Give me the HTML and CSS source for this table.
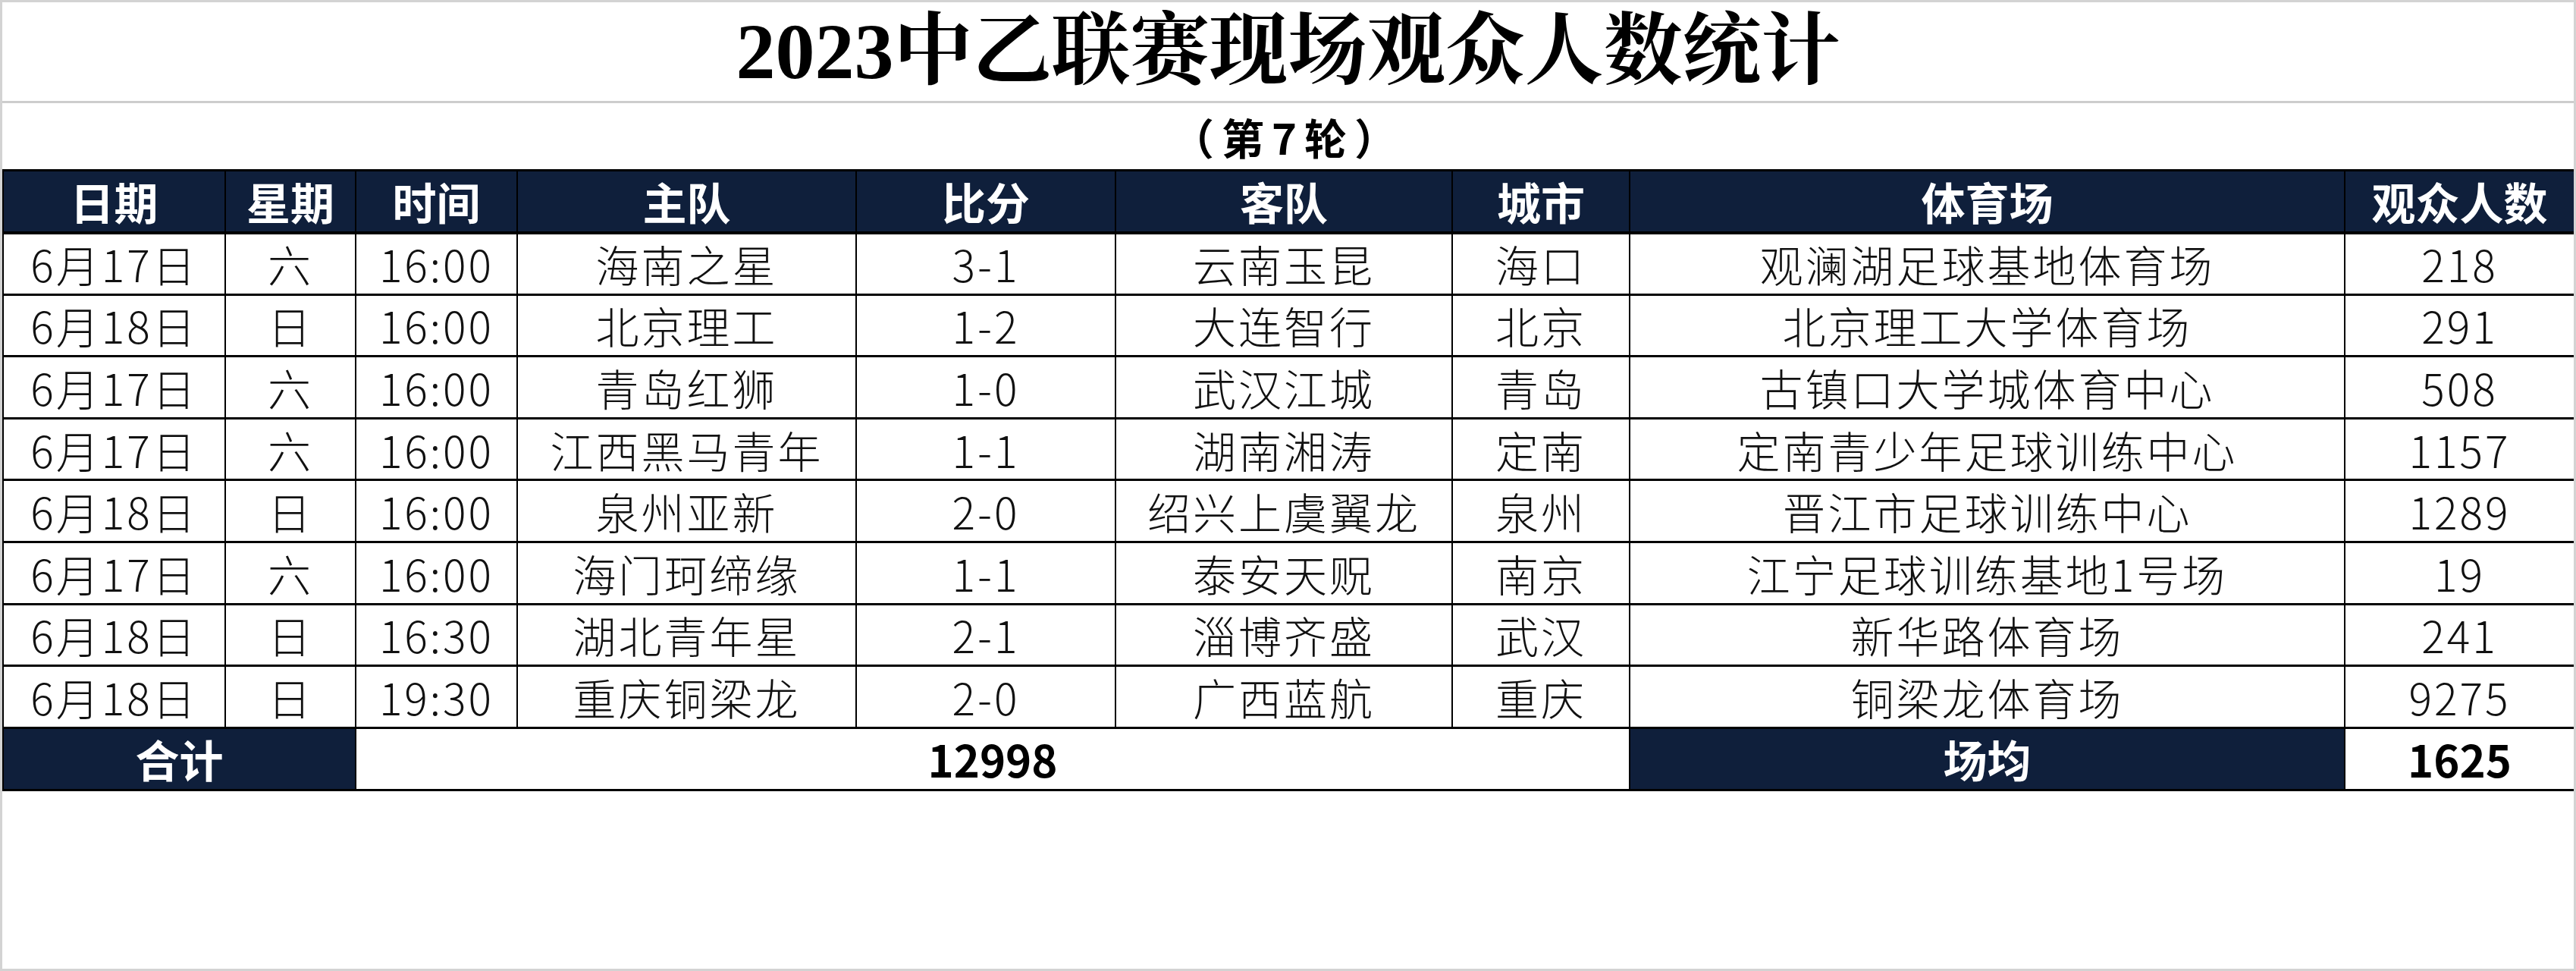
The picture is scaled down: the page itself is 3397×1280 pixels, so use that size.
FILE: index.html
```html
<!DOCTYPE html>
<html lang="zh-CN">
<head>
<meta charset="utf-8">
<title>2023中乙联赛现场观众人数统计</title>
<link rel="stylesheet" href="styles.css">
</head>
<body>
<div class="sheet">
  <div class="title">2023中乙联赛现场观众人数统计</div>
  <div class="subtitle">（第7轮）</div>
  <table class="stats">
    <colgroup>
      <col class="c-date"><col class="c-week"><col class="c-time"><col class="c-home"><col class="c-score"><col class="c-away"><col class="c-city"><col class="c-venue"><col class="c-crowd">
    </colgroup>
    <thead>
      <tr><th>日期</th><th>星期</th><th>时间</th><th>主队</th><th>比分</th><th>客队</th><th>城市</th><th>体育场</th><th>观众人数</th></tr>
    </thead>
    <tbody>
      <tr><td>6月17日</td><td>六</td><td>16:00</td><td>海南之星</td><td>3-1</td><td>云南玉昆</td><td>海口</td><td>观澜湖足球基地体育场</td><td>218</td></tr>
      <tr><td>6月18日</td><td>日</td><td>16:00</td><td>北京理工</td><td>1-2</td><td>大连智行</td><td>北京</td><td>北京理工大学体育场</td><td>291</td></tr>
      <tr><td>6月17日</td><td>六</td><td>16:00</td><td>青岛红狮</td><td>1-0</td><td>武汉江城</td><td>青岛</td><td>古镇口大学城体育中心</td><td>508</td></tr>
      <tr><td>6月17日</td><td>六</td><td>16:00</td><td>江西黑马青年</td><td>1-1</td><td>湖南湘涛</td><td>定南</td><td>定南青少年足球训练中心</td><td>1157</td></tr>
      <tr><td>6月18日</td><td>日</td><td>16:00</td><td>泉州亚新</td><td>2-0</td><td>绍兴上虞翼龙</td><td>泉州</td><td>晋江市足球训练中心</td><td>1289</td></tr>
      <tr><td>6月17日</td><td>六</td><td>16:00</td><td>海门珂缔缘</td><td>1-1</td><td>泰安天贶</td><td>南京</td><td>江宁足球训练基地1号场</td><td>19</td></tr>
      <tr><td>6月18日</td><td>日</td><td>16:30</td><td>湖北青年星</td><td>2-1</td><td>淄博齐盛</td><td>武汉</td><td>新华路体育场</td><td>241</td></tr>
      <tr><td>6月18日</td><td>日</td><td>19:30</td><td>重庆铜梁龙</td><td>2-0</td><td>广西蓝航</td><td>重庆</td><td>铜梁龙体育场</td><td>9275</td></tr>
    </tbody>
    <tfoot>
      <tr><th colspan="2">合计</th><td colspan="5" class="sum">12998</td><th>场均</th><td class="sum">1625</td></tr>
    </tfoot>
  </table>
</div>
</body>
</html>
```

FILE: styles.css
```css
html, body {
  margin: 0;
  padding: 0;
  background: #ffffff;
}

.sheet {
  width: 3397px;
  height: 1280px;
  box-sizing: border-box;
  border: 3px solid #d3d3d3;
  background: #ffffff;
  overflow: hidden;
}

.title {
  height: 130px;
  border-bottom: 3px solid #cdcdcd;
  display: flex;
  align-items: center;
  justify-content: center;
  font-family: "Liberation Serif", "Noto Serif CJK SC", "Noto Sans CJK SC", serif;
  font-size: 104px;
  font-weight: 700;
  line-height: 1;
  color: #000000;
}

.subtitle {
  height: 87px;
  display: flex;
  align-items: center;
  justify-content: center;
  font-family: "Noto Sans CJK SC", sans-serif;
  font-size: 56px;
  font-weight: 700;
  letter-spacing: 10px;
  line-height: 1;
  color: #000000;
}

.stats {
  width: 100%;
  table-layout: fixed;
  border-collapse: collapse;
  font-family: "Noto Sans CJK SC", sans-serif;
}

.c-date { width: 293px; }
.c-week { width: 172px; }
.c-time { width: 213px; }
.c-home { width: 447px; }
.c-score { width: 342px; }
.c-away { width: 444px; }
.c-city { width: 234px; }
.c-venue { width: 943px; }
.c-crowd { width: 303px; }

.stats th,
.stats td {
  padding: 0;
  text-align: center;
  vertical-align: middle;
  border-left: 2px solid #000000;
  border-right: 2px solid #000000;
  border-top: 3px solid #000000;
  border-bottom: 3px solid #000000;
  white-space: nowrap;
  overflow: hidden;
}

.stats th {
  background: #0f1f3b;
  color: #ffffff;
  font-size: 58px;
  font-weight: 700;
  line-height: 1;
}

.stats thead tr {
  height: 82px;
}

.stats thead th {
  border-bottom: 4px solid #000000;
}

.stats tbody tr {
  height: 81.6px;
}

.stats tbody td {
  font-size: 57px;
  font-weight: 300;
  letter-spacing: 3px;
  color: #111111;
  line-height: 1;
}

.stats tfoot tr {
  height: 82px;
}

.stats tfoot th {
  font-size: 58px;
}

.stats td.sum {
  font-size: 58px;
  font-weight: 700;
  color: #000000;
  line-height: 1;
  letter-spacing: 0;
}
```
